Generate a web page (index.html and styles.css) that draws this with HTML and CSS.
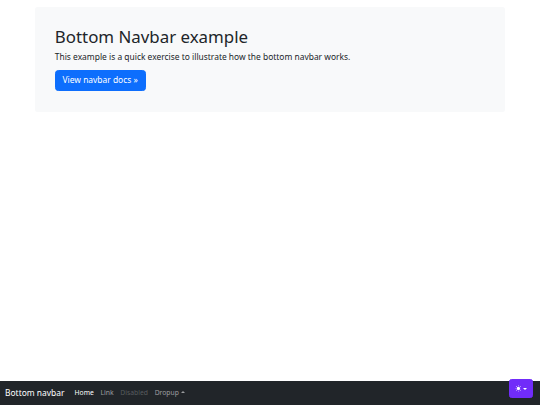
FILE: index.html
```html
<!DOCTYPE html>
<html lang="en">
<head>
<meta charset="utf-8">
<title>Bottom navbar example</title>
<link rel="stylesheet" href="styles.css">
</head>
<body>
<main class="container">
  <div class="hero">
    <h1 class="hero-title">Bottom Navbar example</h1>
    <p class="lead">This example is a quick exercise to illustrate how the bottom navbar works.</p>
    <a class="btn-primary" href="#">View navbar docs &raquo;</a>
  </div>
</main>

<nav class="navbar">
  <a class="brand" href="#">Bottom navbar</a>
  <ul class="nav">
    <li><a class="nav-link active" href="#">Home</a></li>
    <li><a class="nav-link" href="#">Link</a></li>
    <li><a class="nav-link disabled" href="#">Disabled</a></li>
    <li><a class="nav-link dropup" href="#">Dropup</a></li>
  </ul>
</nav>

<div class="mode-toggle">
  <button class="mode-btn" type="button" aria-label="Toggle theme">
    <svg class="mode-icon" viewBox="0 0 16 16" width="6.75" height="6.75" fill="currentColor" aria-hidden="true">
      <path d="M8 12a4 4 0 1 0 0-8 4 4 0 0 0 0 8zM8 0a.5.5 0 0 1 .5.5v2a.5.5 0 0 1-1 0v-2A.5.5 0 0 1 8 0zm0 13a.5.5 0 0 1 .5.5v2a.5.5 0 0 1-1 0v-2A.5.5 0 0 1 8 13zm8-5a.5.5 0 0 1-.5.5h-2a.5.5 0 0 1 0-1h2a.5.5 0 0 1 .5.5zM3 8a.5.5 0 0 1-.5.5h-2a.5.5 0 0 1 0-1h2A.5.5 0 0 1 3 8zm10.657-5.657a.5.5 0 0 1 0 .707l-1.414 1.415a.5.5 0 1 1-.707-.708l1.414-1.414a.5.5 0 0 1 .707 0zm-9.193 9.193a.5.5 0 0 1 0 .707L3.05 13.657a.5.5 0 0 1-.707-.707l1.414-1.414a.5.5 0 0 1 .707 0zm9.193 2.121a.5.5 0 0 1-.707 0l-1.414-1.414a.5.5 0 0 1 .707-.707l1.414 1.414a.5.5 0 0 1 0 .707zM4.464 4.465a.5.5 0 0 1-.707 0L2.343 3.05a.5.5 0 1 1 .707-.707l1.414 1.414a.5.5 0 0 1 0 .708z"/>
    </svg>
    <span class="caret-down"></span>
  </button>
</div>
</body>
</html>
```

FILE: styles.css
```css
* { box-sizing: border-box; }

html, body { height: 100%; }

body {
  margin: 0;
  display: flex;
  flex-direction: column;
  font-family: "Noto Sans", "Open Sans", "Liberation Sans", sans-serif;
  font-size: 6.75px;
  line-height: 1.5;
  color: #212529;
  background: #fff;
}

.container {
  width: 100%;
  max-width: 481px;
  margin: 0 auto;
  padding: 0 5.06px;
}

.hero {
  margin-top: 6.75px;
  padding: 20.25px;
  background: #f8f9fa;
  border-radius: 2.53px;
}

.hero-title {
  margin: 0 0 3.375px;
  font-size: 16.875px;
  font-weight: 400;
  line-height: 1.2;
}

.lead {
  margin: 0 0 6.75px;
  font-size: 8.4375px;
  font-weight: 400;
  line-height: 1.5;
}

.btn-primary {
  display: inline-block;
  padding: 3.375px 6.75px;
  font-size: 8.4375px;
  line-height: 1.5;
  color: #fff;
  text-decoration: none;
  background: #0d6efd;
  border: 0.42px solid #0d6efd;
  border-radius: 3.375px;
}

.navbar {
  margin-top: auto;
  display: flex;
  align-items: center;
  padding: 3.375px 5.06px;
  background: #212529;
}

.brand {
  padding: 2.1px 0;
  margin-right: 6.75px;
  font-size: 8.4375px;
  line-height: 1.5;
  color: #fff;
  text-decoration: none;
  white-space: nowrap;
}

.nav {
  display: flex;
  margin: 0;
  padding: 0;
  list-style: none;
}

.nav-link {
  display: block;
  padding: 3.375px;
  font-size: 6.75px;
  line-height: 1.5;
  color: rgba(255, 255, 255, 0.55);
  text-decoration: none;
}

.nav-link.active { color: #fff; }
.nav-link.disabled { color: rgba(255, 255, 255, 0.25); }

.dropup::after {
  content: "";
  display: inline-block;
  margin-left: 0.255em;
  vertical-align: 0.255em;
  border-top: 0;
  border-right: 0.3em solid transparent;
  border-bottom: 0.3em solid;
  border-left: 0.3em solid transparent;
}

.mode-toggle {
  position: fixed;
  right: 6.75px;
  bottom: 6.75px;
}

.mode-btn {
  display: flex;
  align-items: center;
  padding: 3.375px 5.06px;
  font-family: inherit;
  font-size: 6.75px;
  line-height: 1.5;
  color: #fff;
  background: #712cf9;
  border: 0.42px solid #712cf9;
  border-radius: 2.53px;
}

.mode-icon {
  display: block;
  margin: 1.69px 0;
}

.caret-down {
  display: inline-block;
  margin-left: 0.255em;
  border-top: 0.3em solid;
  border-right: 0.3em solid transparent;
  border-left: 0.3em solid transparent;
}
```
